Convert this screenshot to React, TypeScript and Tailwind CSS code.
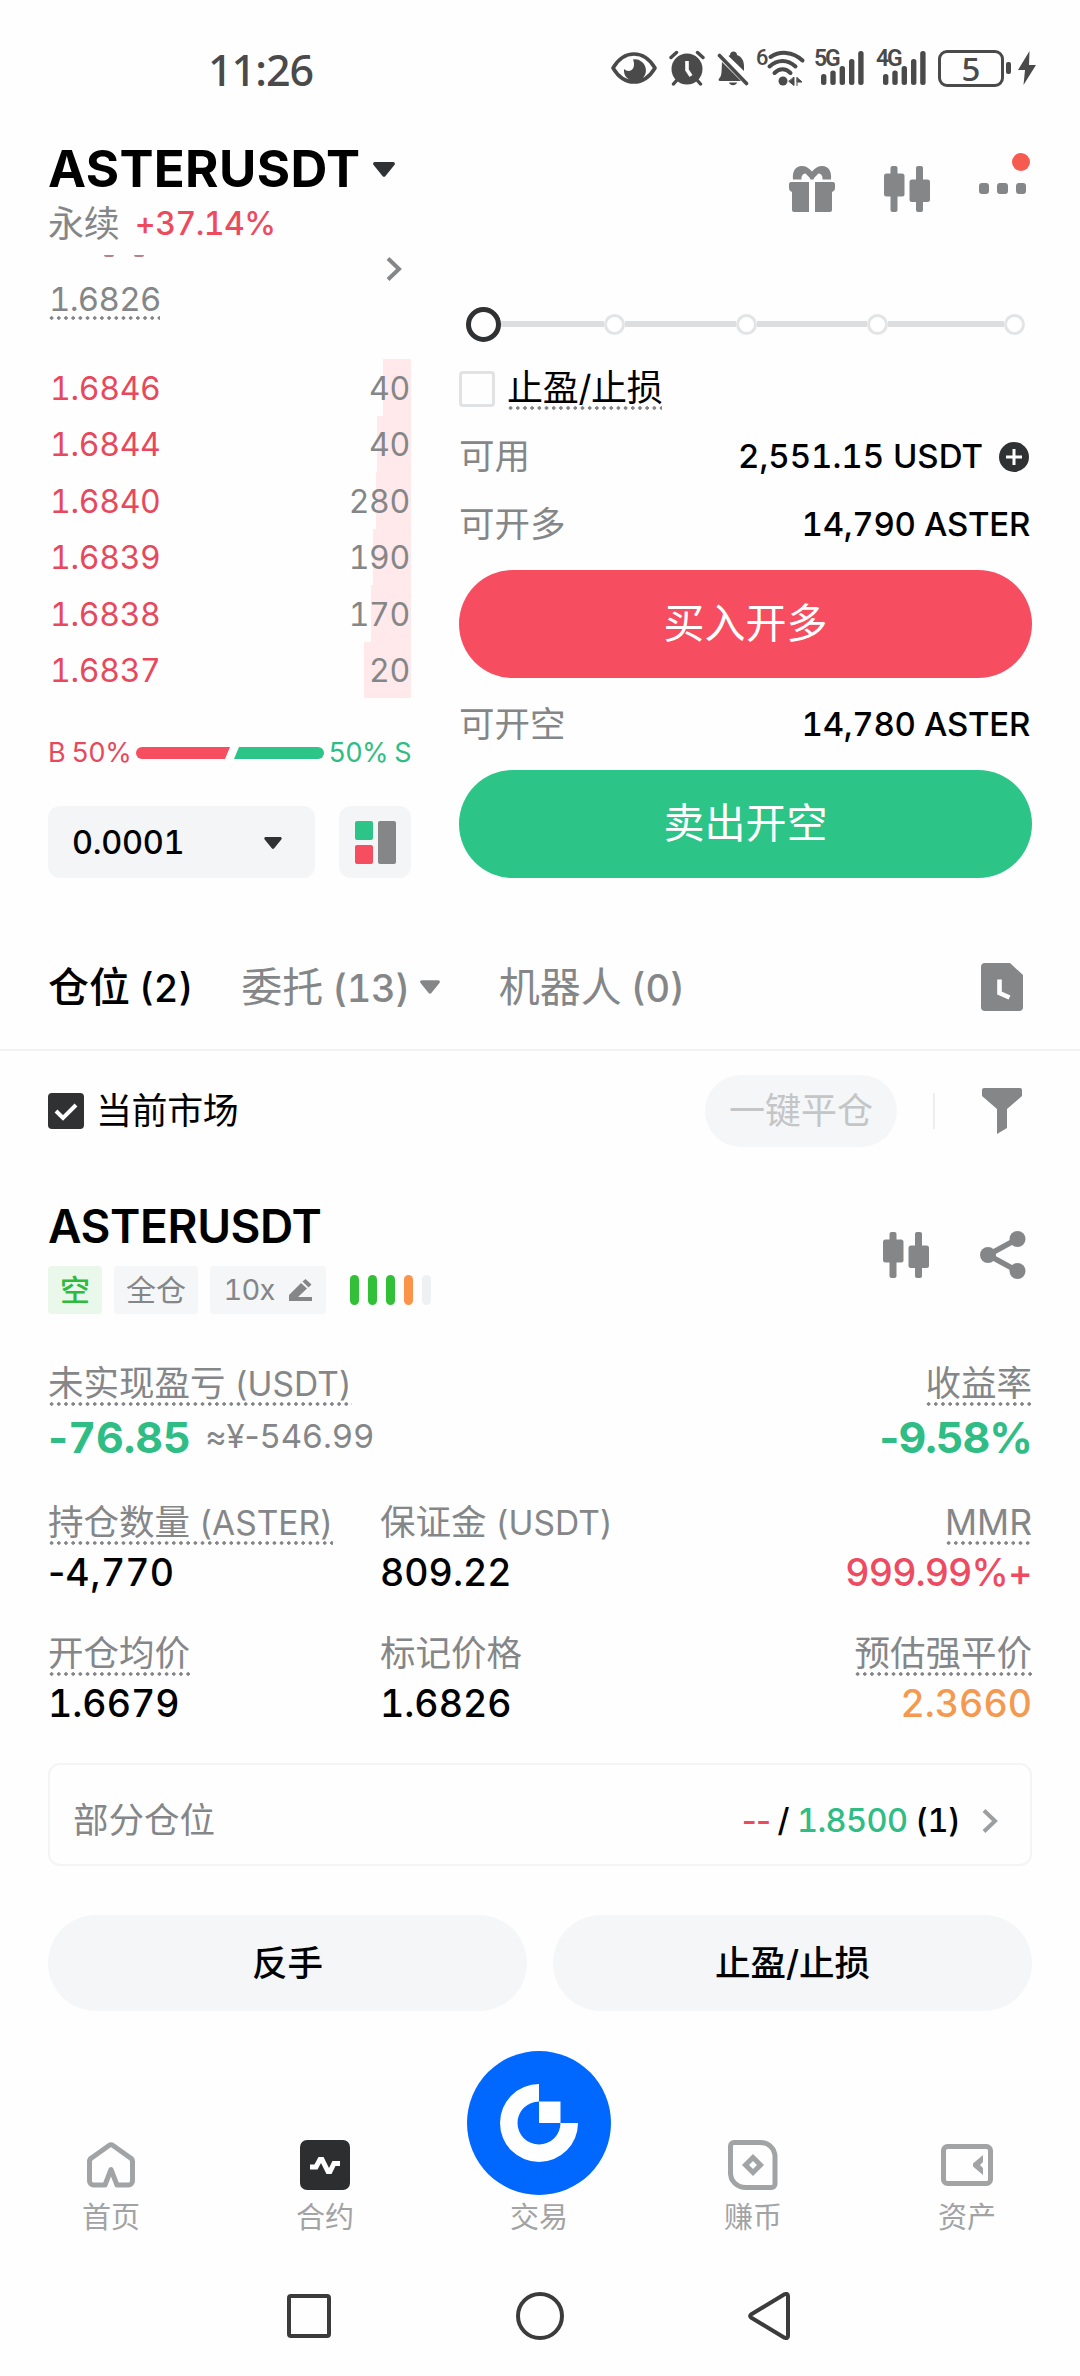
import React from "react";

const asks = [
	{ price: "1.6846", amount: "40", depth: 28 },
	{ price: "1.6844", amount: "40", depth: 34 },
	{ price: "1.6840", amount: "280", depth: 35 },
	{ price: "1.6839", amount: "190", depth: 38 },
	{ price: "1.6838", amount: "170", depth: 40 },
	{ price: "1.6837", amount: "20", depth: 47 },
];

const dotted =
	"bg-[radial-gradient(circle,#848688_1.5px,transparent_2px)] bg-[length:7.2px_4px] bg-bottom-left bg-repeat-x";

// Digits stay tabular, signs and separators keep their own width
const Num = ({ children }: { children: string }) => (
	<>
		{children.split(/([-+%,¥≈]+)/).map((part, i) =>
			i % 2 ? (
				<span key={i} className="proportional-nums">
					{part}
				</span>
			) : (
				part
			)
		)}
	</>
);

const Caret = ({ className }: { className: string }) => (
	<svg viewBox="0 0 22 15" className={className} fill="currentColor">
		<path d="M2 0h18c1.700 0 2.500 1.800 1.400 3L12.500 14a2 2 0 0 1-3 0L.600 3C-.500 1.800.300 0 2 0z" />
	</svg>
);

const Chevron = ({ className }: { className: string }) => (
	<svg viewBox="0 0 16 24" className={className} fill="none" stroke="currentColor" strokeWidth="4">
		<path d="M2 1.500 13 12 2 22.500" />
	</svg>
);

const Candles = () => (
	<svg viewBox="0 0 46 46" className="h-[46px] w-[46px]" fill="currentColor">
		<rect x="6.500" y="0" width="7" height="46" rx="2" />
		<rect x="0" y="7.500" width="20.500" height="23" rx="2.500" />
		<rect x="32" y="0" width="7" height="46" rx="2" />
		<rect x="25.500" y="13.500" width="20.500" height="22.500" rx="2.500" />
	</svg>
);

const Signal = ({ label }: { label: string }) => (
	<div className="relative h-9 w-[50px]">
		<span className="absolute -top-[2px] left-0 font-['Roboto',sans-serif] text-[23px] leading-[22px] font-semibold tracking-[-2.2px]">
			{label}
		</span>
		<svg viewBox="0 0 50 36" className="h-9 w-[50px]" fill="currentColor">
			<rect x="7" y="24" width="5.400" height="11" rx="2.500" />
			<rect x="16.300" y="20.500" width="5.400" height="14.500" rx="2.500" />
			<rect x="25.600" y="16" width="5.400" height="19" rx="2.500" />
			<rect x="35" y="9" width="5.400" height="26" rx="2.500" />
			<rect x="44.200" y="1" width="5.400" height="34" rx="2.500" />
		</svg>
	</div>
);

const StatusBar = () => (
	<div className="flex h-[136px] items-center text-[#4a4a4a]">
		<span className="mt-[3px] ml-[208px] w-[403px] font-['Noto_Sans',sans-serif] text-[43px] leading-none font-medium tracking-[-1px]">
			11:26
		</span>
		<svg viewBox="0 0 46 32" className="h-8 w-[46px]">
			<path d="M2 16C8 6 15 2 23 2s15 4 21 14c-6 10-13 14-21 14S8 26 2 16z" fill="none" stroke="currentColor" strokeWidth="3.600" strokeLinejoin="round" />
			<path d="M22 7.500a11 11 0 1 1-9 9.500c3 3 8 2.500 9.500-1.500 1-3 .5-5.500-.5-8z" fill="currentColor" />
		</svg>
		<svg viewBox="0 0 36 36" className="ml-3 h-9 w-9" fill="none" stroke="currentColor" strokeLinecap="round">
			<circle cx="18" cy="19" r="15.500" fill="currentColor" stroke="none" />
			<path d="M2 7.500 7.500 2.500M34 7.500 28.500 2.500M8 30l-3.500 4M28 30l3.500 4" strokeWidth="3.400" />
			<path d="M18 11v9l4 6" stroke="white" strokeWidth="3.600" strokeLinecap="butt" />
		</svg>
		<svg viewBox="0 0 32 36" className="ml-3 h-9 w-8" fill="currentColor">
			<path d="M11.500 6 13 5c0-2 1.500-3.500 3.500-3.500S20 3 20 5c5 2 7 6 7 11v5z" />
			<path d="M5 12 24 31H3c-1.500 0-2-2-.5-3C5 26 4.500 20 5 12z" />
			<path d="M12 32.500h8c-1 3.500-7 3.500-8 0z" />
			<path d="m2.500 5.500 27 28" stroke="currentColor" strokeWidth="3.600" strokeLinecap="round" />
		</svg>
		<div className="relative ml-[7px] h-[38px] w-[50px]">
			<span className="absolute -top-[2px] left-0 font-['Roboto',sans-serif] text-[22px] leading-[22px] font-medium">
				6
			</span>
			<svg viewBox="0 0 50 38" className="h-[38px] w-[50px]" fill="none" stroke="currentColor" strokeLinecap="round" strokeWidth="4">
				<path d="M14.500 8c9-6 22-6 32 3.500M13.500 17.500c8-7.500 18-7.500 26 0M18.500 24c5-5 11-5 16 0" />
				<circle cx="27" cy="32" r="4.500" fill="currentColor" stroke="none" />
				<path d="M38 28.500v8l-5-4zM41 28.500v8M41.500 29l4.500 4h-4.500z" fill="currentColor" strokeWidth="1" />
			</svg>
		</div>
		<div className="ml-2">
			<Signal label="5G" />
		</div>
		<div className="ml-3">
			<Signal label="4G" />
		</div>
		<div className="ml-[12px] flex h-[37px] w-[66px] items-center justify-center rounded-[9px] border-3 border-current font-['Noto_Sans',sans-serif] text-[33px] leading-none font-medium">
			5
		</div>
		<div className="ml-[2px] h-3 w-[5px] rounded-[2px] bg-current" />
		<svg viewBox="0 0 18 34" className="ml-[7px] h-[34px] w-[18px]" fill="currentColor">
			<path d="M11.500 0 0 19h7l-1.500 15L18 14h-7z" />
		</svg>
	</div>
);

const Header = () => (
	<header className="flex h-[116px] justify-between pr-[54px] pl-12">
		<div>
			<h1 className="flex h-16 items-center gap-[13px] pt-[2px] text-[51px] font-bold tracking-[0.35px] text-black">
				ASTERUSDT
				<Caret className="h-[15px] w-[22px] text-[#303133]" />
			</h1>
			<div className="flex h-[46px] items-center gap-[15px] pt-[1px]">
				<span className="text-[36px] tracking-[-0.3px] text-[#848688]">永续</span>
				<span className="text-[32px] font-medium tracking-[-0.5px] text-[#ee4a5e]">
					<Num>+37.14%</Num>
				</span>
			</div>
		</div>
		<div className="flex h-[105px] items-center text-[#848688]">
			<svg viewBox="0 0 46 46" className="mr-[49px] h-[46px] w-[46px]" fill="currentColor">
				<path d="M4 13.500C3 5 7 0 12.500 0 17 0 20 2 23 5.500 26 2 29 0 33.500 0 39 0 43 5 42 13.500h-8.500c.5-4-2-6-4-6-1.500 2-4 3-5 6h-3c-1-3-3.500-4-5-6-2 0-4.500 2-4 6z" />
				<path d="M2 16h18v30H5a2 2 0 0 1-2-2V26c-2-1-3-2-3-4v-4a2 2 0 0 1 2-2zM26 16h18a2 2 0 0 1 2 2v4c0 2-1 3-3 4v18a2 2 0 0 1-2 2H26z" />
			</svg>
			<Candles />
			<div className="relative ml-[49px] flex gap-2">
				<i className="h-[10.500px] w-[10.500px] rounded-[3px] bg-current" />
				<i className="h-[10.500px] w-[10.500px] rounded-[3px] bg-current" />
				<i className="h-[10.500px] w-[10.500px] rounded-[3px] bg-current" />
				<i className="absolute -top-[30px] -right-[4px] h-[18px] w-[18px] rounded-full bg-[#f65b50]" />
			</div>
		</div>
	</header>
);

const OrderBook = () => (
	<section className="w-[363px]">
		<div className="flex h-[107px] justify-between">
			<div className="pt-[3px]">
				<div className="ml-[56px] flex h-[2px] gap-5">
					<i className="h-[2px] w-[10px] rounded-b-full bg-[#b98287]" />
					<i className="h-[2px] w-[10px] rounded-b-full bg-[#b98287]" />
				</div>
				<div className={`mt-[16px] flex h-[47px] w-[112px] items-center pt-[6px] pl-[1px] text-[33px] tracking-[-0.7px] text-[#848688] ${dotted}`}>
					1.6826
				</div>
			</div>
			<Chevron className="mt-[5px] mr-[9px] h-6 w-4 text-[#848688]" />
		</div>
		{asks.map((row) => (
			<div key={row.price} className="relative flex h-[56.5px] items-center justify-between pt-[3px] pr-[1px] pl-[2px] text-[32px] tracking-[-0.3px]">
				<i className="absolute top-0 right-0 h-full bg-[#ffe9ea]" style={{ width: row.depth }} />
				<span className="relative text-[#e8485c]">{row.price}</span>
				<span className="relative text-[#848688]">{row.amount}</span>
			</div>
		))}
		<div className="mt-[37px] flex h-9 items-center text-[27px] tracking-[-0.7px]">
			<span className="w-[88px] whitespace-nowrap text-[#e8485c]">B 50%</span>
			<svg viewBox="0 0 188 12" className="h-3 w-[188px]">
				<path d="M6 0h88l-5 12H6A6 6 0 0 1 6 0z" fill="#f64d60" />
				<path d="M103 0h79a6 6 0 0 1 0 12H98z" fill="#2dc487" />
			</svg>
			<span className="ml-auto whitespace-nowrap text-[#2fbd85]">50% S</span>
		</div>
		<div className="mt-[35px] flex h-[72px] gap-6">
			<div className="flex w-[267px] items-center justify-between rounded-[12px] bg-[#f3f5f7] pt-[2px] pr-[33px] pl-6 text-[32.500px] font-medium tracking-[-0.3px] text-black">
				0.0001
				<Caret className="h-3 w-[18px] text-[#303133]" />
			</div>
			<div className="flex w-[72px] items-center justify-center gap-[5px] rounded-[12px] bg-[#f3f5f7]">
				<div className="flex flex-col gap-[5px]">
					<i className="h-[19px] w-[18px] rounded-[2px] bg-[#2dc487]" />
					<i className="h-[19px] w-[18px] rounded-[2px] bg-[#f64d60]" />
				</div>
				<i className="h-[43px] w-[18px] rounded-[2px] bg-[#848688]" />
			</div>
		</div>
	</section>
);

const Stop = () => (
	<i className="h-[21px] w-[21px] rounded-full border-3 border-[#e3e4e5] bg-white" />
);

const OrderForm = () => (
	<section className="w-[573px] pt-[55px]">
		<div className="flex h-[34px] items-center pl-[7px]">
			<i className="h-[35px] w-[35px] rounded-full border-[5.500px] border-[#303133]" />
			<i className="h-[6px] w-[103px] bg-[#dddedf]" />
			<Stop />
			<i className="h-[6px] w-[111px] bg-[#dddedf]" />
			<Stop />
			<i className="h-[6px] w-[110px] bg-[#dddedf]" />
			<Stop />
			<i className="h-[6px] w-[116px] bg-[#dddedf]" />
			<Stop />
		</div>
		<div className="mt-[26px] flex h-[43px] items-center">
			<i className="h-9 w-9 rounded-[4px] border-3 border-[#e1e2e3]" />
			<span className={`ml-3 h-[43px] text-[36px] leading-[42px] tracking-[-0.3px] text-black ${dotted}`}>止盈/止损</span>
		</div>
		<div className="mt-[13px] flex h-[67px] items-center text-[33px] font-medium text-black">
			<span className="mr-auto text-[35.500px] font-normal text-[#848688]">可用</span>
			2,551.15 USDT
			<svg viewBox="0 0 30 30" className="mr-[3px] ml-4 h-[30px] w-[30px]">
				<circle cx="15" cy="15" r="15" fill="#303133" />
				<path d="M15 7v16M7 15h16" stroke="white" strokeWidth="3" />
			</svg>
		</div>
		<div className="flex h-17 items-center justify-between pt-[2px] pr-[2px] text-[33px] font-medium tracking-[-0.3px] text-black">
			<span className="text-[35.500px] font-normal tracking-normal text-[#848688]">可开多</span>
			14,790 ASTER
		</div>
		<button className="mt-3 block h-[108px] w-full rounded-full bg-[#f64d60] text-[41px] text-white">买入开多</button>
		<div className="flex h-[92px] items-center justify-between pt-[2px] pr-[2px] text-[33px] font-medium tracking-[-0.3px] text-black">
			<span className="text-[35.500px] font-normal tracking-normal text-[#848688]">可开空</span>
			14,780 ASTER
		</div>
		<button className="block h-[108px] w-full rounded-full bg-[#2dc487] text-[41px] text-white">卖出开空</button>
	</section>
);

const Tabs = () => (
	<nav className="mt-[47px] flex h-[126px] items-center border-b-2 border-[#f1f2f3] pr-[57px] pl-12 text-[41px] leading-none text-[#848688]">
		<span className="font-medium text-black">
			仓位<span className="ml-[9px] text-[38px]">(2)</span>
		</span>
		<span className="ml-12">
			委托<span className="ml-[9px] text-[38px] font-medium tracking-[-0.4px]">(13)</span>
		</span>
		<Caret className="ml-[10px] h-[14px] w-5" />
		<span className="ml-[59px]">
			机器人<span className="ml-[9px] text-[38px] font-medium">(0)</span>
		</span>
		<svg viewBox="0 0 42 48" className="ml-auto h-12 w-[42px]">
			<path d="M4 0h25l13 12v32a4 4 0 0 1-4 4H4a4 4 0 0 1-4-4V4a4 4 0 0 1 4-4z" fill="#848688" />
			<path d="M18.500 16.500V30l10 4.500" fill="none" stroke="white" strokeWidth="4.600" />
		</svg>
	</nav>
);

const Filters = () => (
	<div className="flex h-[120px] items-center pr-[58px] pl-12">
		<svg viewBox="0 0 36 36" className="h-9 w-9">
			<rect width="36" height="36" rx="4" fill="#303133" />
			<path d="m8 18 7 7 13-13" fill="none" stroke="white" strokeWidth="4" />
		</svg>
		<span className="ml-3 text-[36px] tracking-[-0.4px] text-black">当前市场</span>
		<button className="ml-auto h-[72px] w-[192px] rounded-full bg-[#f4f6f8] text-[36px] text-[#c3c5c7]">一键平仓</button>
		<i className="ml-[36px] h-9 w-[2px] bg-[#eceded]" />
		<svg viewBox="0 0 40 46" className="ml-[47px] h-[46px] w-10" fill="#848688">
			<path d="M2 0h36a2 2 0 0 1 2 2v6L25 21v19l-10 6V21L0 8V2a2 2 0 0 1 2-2z" />
		</svg>
	</div>
);

type StatProps = {
	label: string;
	unit?: string;
	value: string;
	underline?: boolean;
	right?: boolean;
	tone?: string;
	className?: string;
};

const Stat = ({ label, unit, value, underline, right, tone = "text-black", className = "" }: StatProps) => (
	<div className={`flex flex-col ${right ? "items-end" : "items-start"} ${className}`}>
		<span className={`h-11 text-[35.500px] leading-[44px] whitespace-nowrap text-[#848688] ${underline ? dotted : ""}`}>
			{label}
			{unit && <span className="text-[33.500px]"> {unit}</span>}
		</span>
		<span className={`mt-[6px] h-[43px] text-[37.500px] leading-[43px] font-medium ${tone}`}>
			<Num>{value}</Num>
		</span>
	</div>
);

const Position = () => (
	<section className="px-12">
		<div className="mt-[25px] flex items-center text-[#848688]">
			<div className="mr-auto">
				<h2 className="h-[60px] text-[46px] leading-[60px] font-semibold tracking-[-0.4px] text-black">ASTERUSDT</h2>
				<div className="mt-[10px] flex h-12 items-center gap-3 text-[30px]">
					<span className="flex h-12 w-[54px] items-center justify-center rounded-[4px] bg-[#eaf8eb] font-medium text-[#2eba3a]">空</span>
					<span className="flex h-12 w-[84px] items-center justify-center rounded-[4px] bg-[#f4f6f8]">全仓</span>
					<span className="flex h-12 w-[116px] items-center justify-center gap-[14px] rounded-[4px] bg-[#f4f6f8] text-[29px] tracking-[-0.8px]">
						10x
						<svg viewBox="0 0 24 22" className="h-[22px] w-6" fill="currentColor">
							<path d="M0 22v-6L12 4l6 5.500L9 18h14v4z" />
							<path d="m13.500 2.500 3-2.500 6 5.500-3 3z" />
						</svg>
					</span>
					<div className="ml-3 flex gap-[9px]">
						<i className="h-[30px] w-[9px] rounded-full bg-[#31c037]" />
						<i className="h-[30px] w-[9px] rounded-full bg-[#31c037]" />
						<i className="h-[30px] w-[9px] rounded-full bg-[#31c037]" />
						<i className="h-[30px] w-[9px] rounded-full bg-[#fb944a]" />
						<i className="h-[30px] w-[9px] rounded-full bg-[#eff0f1]" />
					</div>
				</div>
			</div>
			<Candles />
			<svg viewBox="0 0 46 48" className="mr-[6px] ml-[51px] h-12 w-[46px]" fill="currentColor">
				<circle cx="8" cy="24" r="8" />
				<circle cx="37.500" cy="8" r="8" />
				<circle cx="37.500" cy="40" r="8" />
				<path d="M37.500 8 8 24l29.500 16" fill="none" stroke="currentColor" strokeWidth="5.500" />
			</svg>
		</div>

		<div className="mt-12 flex justify-between">
			<div>
				<span className={`block h-11 w-[304px] text-[35.500px] leading-[44px] whitespace-nowrap text-[#848688] ${dotted}`}>
					未实现盈亏<span className="text-[33.500px]"> (USDT)</span>
				</span>
				<div className="mt-[6px] flex h-[50px] items-center gap-[14px]">
					<span className="text-[43px] font-bold text-[#2fbd85]">
						<Num>-76.85</Num>
					</span>
					<span className="text-[33px] tracking-[-0.2px] text-[#848688]">
						<Num>≈¥-546.99</Num>
					</span>
				</div>
			</div>
			<div className="flex flex-col items-end">
				<span className={`h-11 text-[35.500px] leading-[44px] text-[#848688] ${dotted}`}>收益率</span>
				<span className="mt-[6px] h-[50px] text-[43px] leading-[50px] font-bold tracking-[-1px] text-[#2fbd85]">
					<Num>-9.58%</Num>
				</span>
			</div>
		</div>

		<div className="mt-[39px] flex">
			<Stat className="w-[332px]" label="持仓数量" unit="(ASTER)" value="-4,770" underline />
			<Stat label="保证金" unit="(USDT)" value="809.22" />
			<Stat className="ml-auto" label="MMR" value="999.99%+" tone="tracking-[-0.9px] text-[#ee4a62]" underline right />
		</div>
		<div className="mt-[38px] flex">
			<Stat className="w-[332px]" label="开仓均价" value="1.6679" underline />
			<Stat label="标记价格" value="1.6826" />
			<Stat className="ml-auto" label="预估强平价" value="2.3660" tone="text-[#f4994f]" underline right />
		</div>

		<div className="mt-[38px] flex h-[103px] items-center rounded-[12px] border-2 border-[#f3f4f5] pt-[13px] pr-[32px] pl-[23px] text-[32.500px] font-medium tracking-[-0.6px] text-black">
			<span className="mr-auto text-[35.500px] font-normal tracking-normal text-[#848688]">部分仓位</span>
			<span className="text-[#ee4a5e]">
				<Num>--</Num>
			</span>
			<span className="ml-[7px]">/</span>
			<span className="ml-[8px] text-[#2fbd85]">1.8500</span>
			<span className="ml-[8px]">(1)</span>
			<Chevron className="ml-[22px] h-6 w-4 text-[#9c9ea0]" />
		</div>

		<div className="mt-[49px] flex h-24 gap-[26px] text-[35.500px] font-medium text-black">
			<button className="flex-1 rounded-full bg-[#f4f6f8] pt-[1px]">反手</button>
			<button className="flex-1 rounded-full bg-[#f4f6f8] pt-[1px]">止盈/止损</button>
		</div>
	</section>
);

const TabItem = ({ label, children }: { label: string; children: React.ReactNode }) => (
	<div className="flex flex-1 flex-col items-center">
		<div className="flex h-[50px] items-center">{children}</div>
		<span className="mt-2 h-10 text-[29px] leading-10">{label}</span>
	</div>
);

const BottomBar = () => (
	<div className="mt-10 flex h-[187px] items-end pr-[6px] pl-1 text-[#a1a3a5]">
		<TabItem label="首页">
			<svg viewBox="0 0 48 46" className="h-[46px] w-12" fill="none" stroke="currentColor" strokeWidth="5" strokeLinejoin="round">
				<path d="M24 27.500 18 43H6.500a4 4 0 0 1-4-4V19.500c0-1.500.7-2.700 2-3.500L22 3.500c1.200-.9 2.800-.9 4 0L43.500 16c1.300.8 2 2 2 3.500V39a4 4 0 0 1-4 4H30z" />
			</svg>
		</TabItem>
		<TabItem label="合约">
			<svg viewBox="0 0 50 50" className="h-[50px] w-[50px]">
				<rect width="50" height="50" rx="7" fill="#2d2e30" />
				<path d="M10 27h6l4-7.500h2l6 12h2l4-8h6" fill="none" stroke="white" strokeWidth="5" />
			</svg>
		</TabItem>
		<div className="flex flex-1 flex-col items-center">
			<svg viewBox="0 0 144 144" className="h-36 w-36">
				<circle cx="72" cy="72" r="72" fill="#0068ff" />
				<path d="M72 33a39 39 0 1 0 39 39H93.500A21.500 21.500 0 1 1 72 50.500z" fill="white" />
				<path d="M72 50.500h21.500V72H72z" fill="white" />
			</svg>
			<span className="mt-[3px] h-10 text-[29px] leading-10">交易</span>
		</div>
		<TabItem label="赚币">
			<svg viewBox="0 0 50 50" className="h-[50px] w-[50px]" fill="none" stroke="currentColor" strokeWidth="5">
				<path d="M6 2.500h26C41 2.500 47 9 47 17v27a3.500 3.500 0 0 1-3.500 3.500H18C9 47.500 2.500 41 2.500 33V6A3.500 3.500 0 0 1 6 2.500z" />
				<path d="m25 17.500 7.500 7.500-7.500 7.500-7.500-7.500z" />
			</svg>
		</TabItem>
		<TabItem label="资产">
			<svg viewBox="0 0 52 42" className="h-[42px] w-[52px]">
				<rect x="2.500" y="2.500" width="47" height="37" rx="4" fill="none" stroke="currentColor" strokeWidth="5" />
				<path d="M42 11v7l-3 3 3 3v7l-10-8.500v-3z" fill="currentColor" />
			</svg>
		</TabItem>
	</div>
);

const SystemNav = () => (
	<div className="mt-[52px] flex h-[52px] items-center pl-[287px] text-[#3b3b3b]">
		<i className="h-11 w-11 rounded-[4px] border-4 border-current" />
		<i className="ml-[185px] h-12 w-12 rounded-full border-4 border-current" />
		<svg viewBox="0 0 42 48" className="ml-[184px] h-12 w-[42px]" fill="none" stroke="currentColor" strokeWidth="4" strokeLinejoin="round">
			<path d="M36.500 2.300 3 22.500q-1.800 1.500 0 3l33.500 20.200Q40 47 40 44V4Q40 1 36.500 2.300z" />
		</svg>
	</div>
);

const App = () => {
	return (
		<main lang="zh-CN" className="h-[2376px] w-[1080px] overflow-hidden bg-[#fefefe] font-['Inter','Noto_Sans_CJK_SC',sans-serif] tabular-nums">
			<StatusBar />
			<Header />
			<div className="flex justify-between pr-12 pl-12">
				<OrderBook />
				<OrderForm />
			</div>
			<Tabs />
			<Filters />
			<Position />
			<BottomBar />
			<SystemNav />
		</main>
	);
};

export default App;
